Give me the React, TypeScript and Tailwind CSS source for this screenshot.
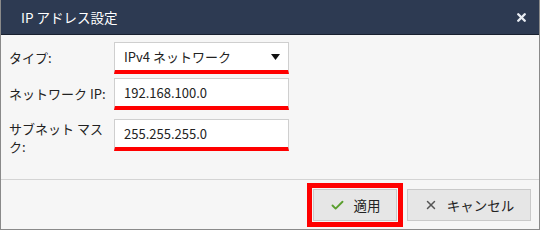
import { Check, X } from 'lucide-react';

const font = { fontFamily: '"Noto Sans CJK JP", "Noto Sans", sans-serif' };

function Field({ children }: { children: React.ReactNode }) {
  return (
    <div className="w-[175px] h-[32px] bg-white border border-[#cfcfcf] border-b-[4px] border-b-[#ff0000] flex items-center pl-[9px] pr-[8px] text-[13px] text-[#222]">
      {children}
    </div>
  );
}

export default function App() {
  return (
    <div
      className="w-[540px] h-[230px] flex flex-col border-x border-b border-[#8a8a8a] bg-[#f6f6f6] overflow-hidden"
      style={font}
    >
      {/* Header */}
      <div className="h-[35px] bg-[#2d3a52] border-b border-[#18202f] flex items-center justify-between pl-[20px] pr-[11px] shrink-0">
        <span className="text-white text-[13.5px]">IP アドレス設定</span>
        <X className="w-[13px] h-[13px] text-[#e8ecf3]" strokeWidth={4.5} />
      </div>

      {/* Body */}
      <div className="flex-1 flex flex-col pl-[8px] pt-[7px] gap-[4px] text-[13px] text-[#222]">
        <div className="flex items-center">
          <div className="w-[105px]">タイプ:</div>
          <Field>
            <span className="flex-1">IPv4 ネットワーク</span>
            <svg width="9" height="6" viewBox="0 0 9 6">
              <path d="M0 0 H9 L4.5 6 Z" fill="#111" />
            </svg>
          </Field>
        </div>
        <div className="flex items-center">
          <div className="w-[105px]">ネットワーク IP:</div>
          <Field>192.168.100.0</Field>
        </div>
        <div className="flex items-start mt-[5px]">
          <div className="w-[105px] leading-[18px] pt-[1px]">
            サブネット マス<br />ク:
          </div>
          <Field>255.255.255.0</Field>
        </div>
      </div>

      {/* Footer */}
      <div className="h-[50px] border-t border-[#d4d4d4] flex items-start justify-end gap-[4px] pr-[8px] pt-[3px] shrink-0">
        <div className="border-[5px] border-[#ff0000] p-[1px]">
          <button className="w-[84px] h-[32px] bg-[#e6e6e6] border border-[#c9c9c9] flex items-center justify-center gap-[9px] text-[13.5px] text-[#222]">
            <Check className="w-[15px] h-[15px] text-[#5a9f2e]" strokeWidth={3} />
            <span>適用</span>
          </button>
        </div>
        <button className="mt-[6px] w-[124px] h-[32px] bg-[#e6e6e6] border border-[#c9c9c9] flex items-center justify-center gap-[9px] text-[13.5px] text-[#222]">
          <X className="w-[14px] h-[14px] text-[#555]" strokeWidth={2.5} />
          <span>キャンセル</span>
        </button>
      </div>
    </div>
  );
}
